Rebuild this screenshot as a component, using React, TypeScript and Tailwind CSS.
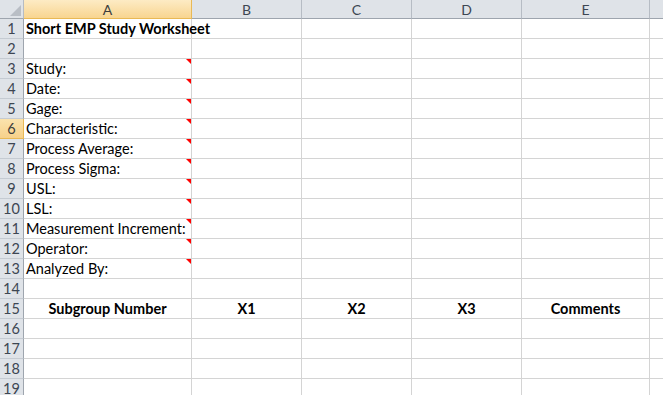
const columns = [
  { id: 'A', width: 'w-[168px]', active: true },
  { id: 'B', width: 'w-[110px]', active: false },
  { id: 'C', width: 'w-[110px]', active: false },
  { id: 'D', width: 'w-[110px]', active: false },
  { id: 'E', width: 'w-[128px]', active: false },
];

const labels: Record<number, string> = {
  1: 'Short EMP Study Worksheet',
  3: 'Study:',
  4: 'Date:',
  5: 'Gage:',
  6: 'Characteristic:',
  7: 'Process Average:',
  8: 'Process Sigma:',
  9: 'USL:',
  10: 'LSL:',
  11: 'Measurement Increment:',
  12: 'Operator:',
  13: 'Analyzed By:',
};

const tableHead = ['Subgroup Number', 'X1', 'X2', 'X3', 'Comments'];

function ColumnHeader({ id, width, active }: { id: string; width: string; active: boolean }) {
  return (
    <div
      className={`${width} h-[19px] shrink-0 flex items-center justify-center border-r border-b text-[14px] ${
        active
          ? 'bg-gradient-to-b from-[#fdebc4] to-[#f8d590] border-r-[#e9b955] border-b-[#e9b955] text-[#3d3d3d]'
          : 'bg-[#dfe3e8] border-r-[#b6bcc4] border-b-[#9ea5ae] text-[#3d4652]'
      }`}
    >
      {id}
    </div>
  );
}

function Row({ n }: { n: number }) {
  const isActive = n === 6;
  const hasNote = n >= 3 && n <= 13;
  const isHead = n === 15;

  return (
    <div className="flex h-[20px]">
      <div
        className={`w-[24px] shrink-0 flex items-center justify-center pt-[1px] border-r border-b text-[14.5px] ${
          isActive
            ? 'bg-gradient-to-b from-[#fbe3ad] to-[#f7d18a] border-r-[#e9b955] border-b-[#e9b955] text-[#3d3d3d]'
            : 'bg-[#dfe3e8] border-r-[#9ea5ae] border-b-[#c5cbd2] text-[#3d4652]'
        }`}
      >
        {n}
      </div>
      {columns.map((col, i) => (
        <div
          key={col.id}
          className={`${col.width} shrink-0 relative border-r border-b border-[#d4d4d4] flex items-end text-[14.5px] leading-[18px] whitespace-nowrap ${
            isHead ? 'justify-center font-bold' : 'pl-[2px]'
          } ${n === 1 ? 'font-bold' : ''} ${i === 0 ? 'z-10' : ''}`}
        >
          {i === 0 && labels[n] && <span>{labels[n]}</span>}
          {isHead && tableHead[i]}
          {i === 0 && hasNote && (
            <span className="absolute top-0 right-0 w-0 h-0 border-t-[5px] border-l-[5px] border-t-[#ff0000] border-l-transparent" />
          )}
        </div>
      ))}
      <div className="flex-1 border-b border-[#d4d4d4]" />
    </div>
  );
}

export default function App() {
  const rows = Array.from({ length: 19 }, (_, i) => i + 1);

  return (
    <div
      className="w-[663px] h-[395px] overflow-hidden bg-white text-black"
      style={{ fontFamily: 'Lato, "Open Sans", sans-serif' }}
    >
      {/* Column headers */}
      <div className="flex">
        <div className="w-[24px] h-[19px] shrink-0 relative bg-[#dfe3e8] border-r border-b border-r-[#b6bcc4] border-b-[#9ea5ae]">
          <span className="absolute right-[2px] bottom-[2px] w-0 h-0 border-b-[11px] border-l-[11px] border-b-[#b9bec5] border-l-transparent" />
        </div>
        {columns.map((col) => (
          <ColumnHeader key={col.id} {...col} />
        ))}
        <div className="flex-1 h-[19px] bg-[#dfe3e8] border-b border-b-[#9ea5ae]" />
      </div>

      {rows.map((n) => (
        <Row key={n} n={n} />
      ))}
    </div>
  );
}
